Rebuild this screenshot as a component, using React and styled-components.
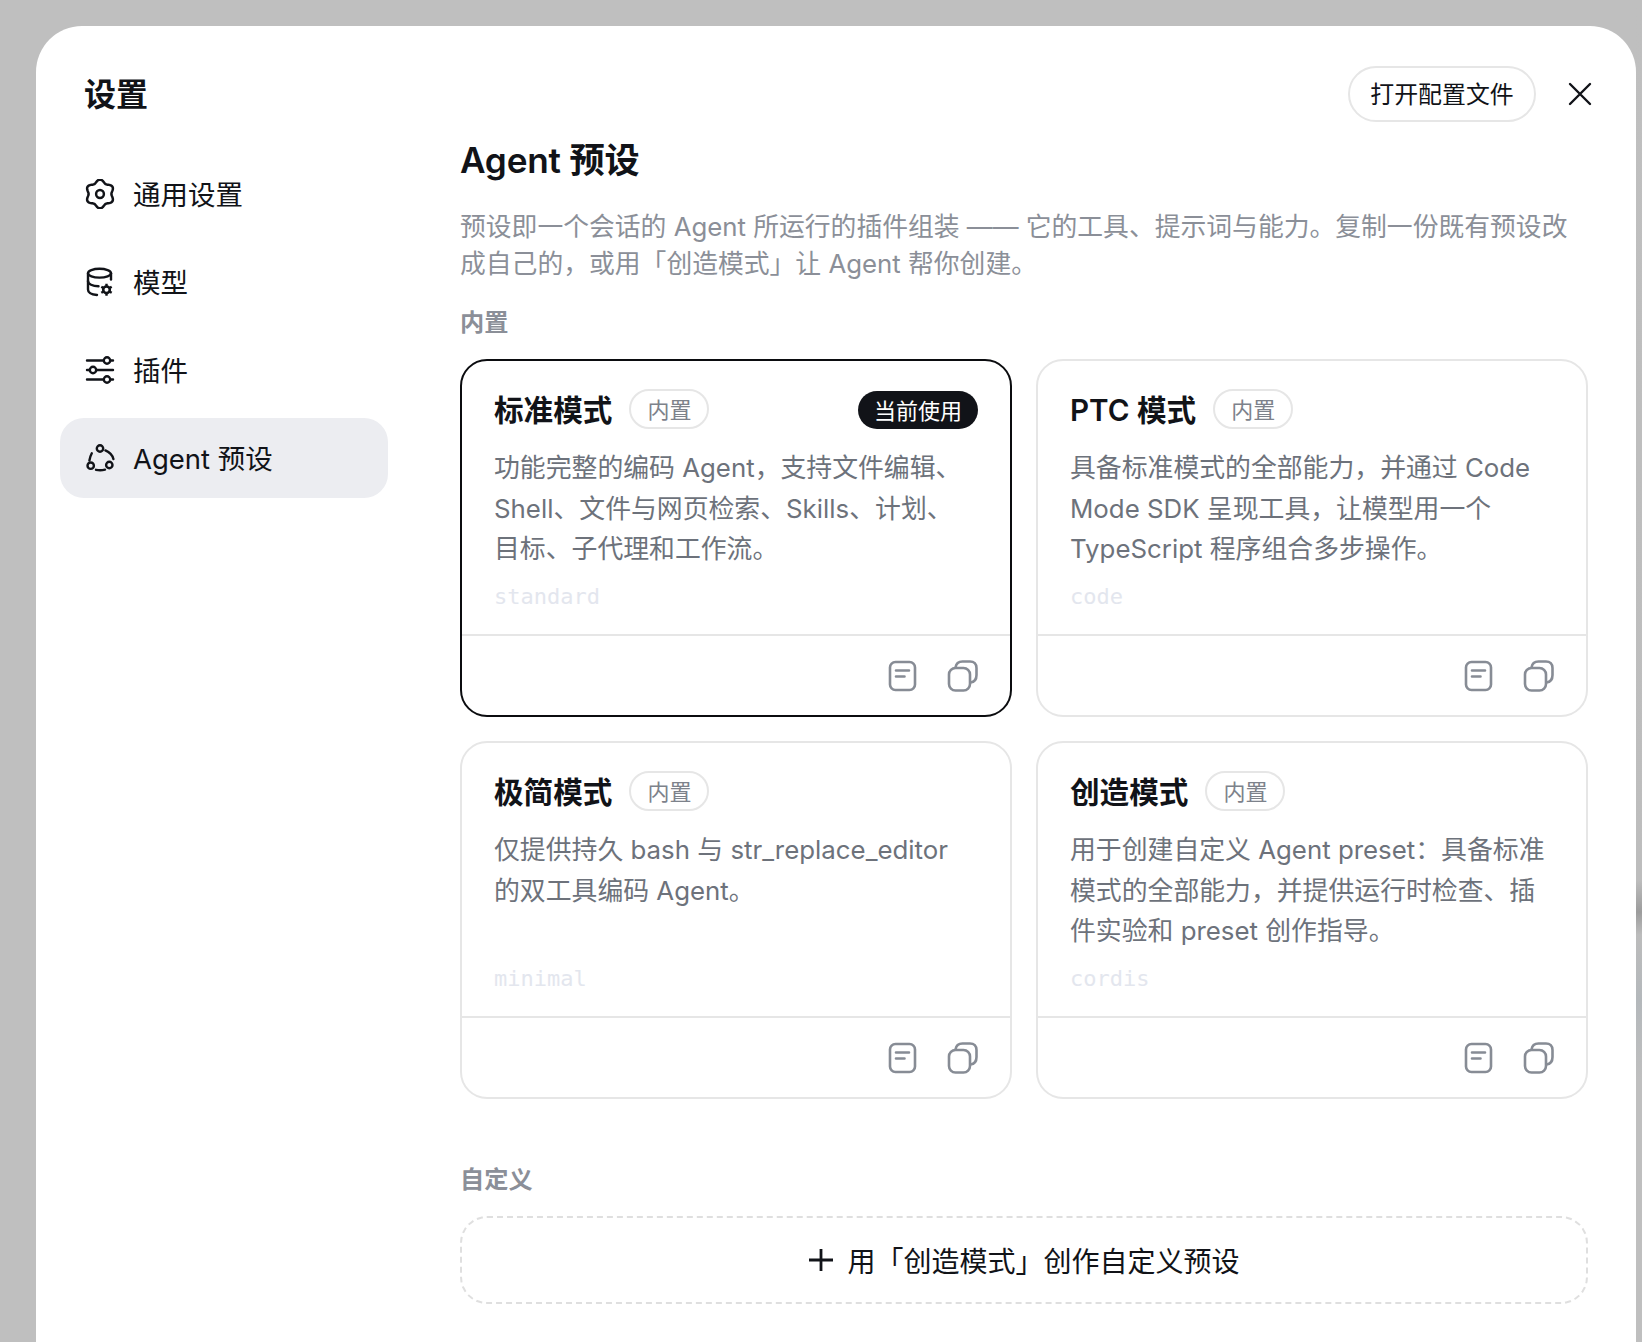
import React from "react";
import styled, { createGlobalStyle } from "styled-components";

const Global = createGlobalStyle`
  html, body { margin: 0; padding: 0; height: 100%; }
  body {
    background-color: #bfbfbf;
    background-image: linear-gradient(to bottom, #bfbfbf 0, #bdbdbd 880px, #9c9c9c 912px, #bcbcbc 935px, #b4b8bb 1000px, #bfbfbf 1080px);
    background-size: 6px 100%;
    background-position: right top;
    background-repeat: no-repeat;
    overflow: hidden;
    font-family: Inter, "Noto Sans CJK SC", sans-serif;
    color: #111318;
  }
  * { box-sizing: border-box; }
`;

const Modal = styled.div`
  margin: 26px 6px 0 36px;
  height: 1316px;
  background: #fff;
  border-radius: 46px 46px 0 0;
  display: grid;
  grid-template-columns: 424px 1fr;
  overflow: hidden;
`;

const Sidebar = styled.aside`
  padding: 49px 72px 0 24px;
  display: flex;
  flex-direction: column;
`;

const SideTitle = styled.h1`
  margin: 0 0 39px 24px;
  font-size: 32px;
  line-height: 40px;
  font-weight: 600;
`;

const NavList = styled.nav`
  display: flex;
  flex-direction: column;
  gap: 8px;
`;

const NavItem = styled.div`
  height: 80px;
  padding: 0 25px;
  display: flex;
  align-items: center;
  gap: 18px;
  border-radius: 24px;
  background: ${(p) => (p.$active ? "#ecedf1" : "transparent")};
  svg { width: 30px; height: 30px; flex: none; }
`;

const NavLabel = styled.span`
  font-size: 27.5px;
  margin-bottom: 3px;
`;

const Main = styled.main`
  position: relative;
  padding: 112px 48px 0 0;
  display: flex;
  flex-direction: column;
`;

const TopActions = styled.div`
  position: absolute;
  top: 40px;
  right: 41px;
  display: flex;
  align-items: center;
  gap: 29px;
`;

const ConfigButton = styled.button`
  height: 56px;
  width: 188px;
  border: 2px solid #e6e6e6;
  border-radius: 28px;
  background: #fff;
  color: #111318;
  font: 400 23.9px Inter, "Noto Sans CJK SC", sans-serif;
  padding: 0 0 3px;
`;

const CloseButton = styled.button`
  width: 30px;
  height: 30px;
  border: 0;
  padding: 0;
  background: none;
  color: #111318;
  display: flex;
  align-items: center;
  justify-content: center;
`;

const Heading = styled.h2`
  margin: 0;
  font-size: 35.2px;
  line-height: 44px;
  font-weight: 600;
  letter-spacing: -0.2px;
`;

const Intro = styled.p`
  margin: 27px 0 0;
  font-size: 25.8px;
  line-height: 36.7px;
  color: #8b8f98;
`;

const SectionLabel = styled.div`
  font-size: 24.2px;
  line-height: 30px;
  font-weight: 600;
  color: #8b8f98;
  margin-top: ${(p) => p.$top}px;
  margin-bottom: 21px;
`;

const CardGrid = styled.div`
  display: grid;
  grid-template-columns: 1fr 1fr;
  grid-auto-rows: 358px;
  gap: 24px;
`;

const Card = styled.article`
  border: 2px solid ${(p) => (p.$current ? "#0b0c0f" : "#e6e6e6")};
  border-radius: 27px;
  display: flex;
  flex-direction: column;
  min-width: 0;
`;

const CardBody = styled.div`
  flex: 1;
  min-height: 0;
  padding: 28px 32px 0;
  display: flex;
  flex-direction: column;
`;

const CardHead = styled.div`
  display: flex;
  align-items: center;
  gap: 17px;
  height: 42px;
`;

const CardName = styled.h3`
  margin: 0;
  font-size: 29.6px;
  line-height: 42px;
  font-weight: 600;
`;

const Tag = styled.span`
  height: 40px;
  margin-bottom: 2px;
  padding: 0 16px 2px;
  border: 2px solid #e6e6e6;
  border-radius: 20px;
  display: flex;
  align-items: center;
  font-size: 22px;
  color: #7d828b;
`;

const CurrentBadge = styled.span`
  margin-left: auto;
  height: 38px;
  padding: 0 16px 3px;
  border-radius: 19px;
  background: #111318;
  color: #fff;
  display: flex;
  align-items: center;
  font-size: 22px;
`;

const Desc = styled.p`
  margin: 17px 0 0;
  font-size: 25.85px;
  line-height: 40.4px;
  color: #6d727b;
  height: 121px;
`;

const Slug = styled.code`
  margin-top: 14px;
  font-family: "DejaVu Sans Mono", monospace;
  font-size: 22px;
  line-height: 28px;
  color: #e3e6ee;
`;

const CardFoot = styled.div`
  height: 81px;
  border-top: 2px solid #e6e6e6;
  padding: 0 31px 0 0;
  display: flex;
  align-items: center;
  justify-content: flex-end;
  gap: 30px;
`;

const IconButton = styled.span`
  display: flex;
  color: #878c95;
`;

const AddButton = styled.button`
  height: 88px;
  border: 2px dashed #dfdfdf;
  border-radius: 27px;
  background: #fff;
  color: #111318;
  font: 400 28px Inter, "Noto Sans CJK SC", sans-serif;
  display: flex;
  align-items: center;
  justify-content: center;
  gap: 13px;
  padding: 0;
`;

const flowerPath = (() => {
  const pts = [];
  for (let i = 0; i < 120; i += 1) {
    const t = (i / 120) * Math.PI * 2;
    const r = 12.9 + 1.5 * Math.cos(6 * t);
    pts.push(`${(15 + r * Math.sin(t)).toFixed(2)} ${(15 - r * Math.cos(t)).toFixed(2)}`);
  }
  return `M${pts.join("L")}Z`;
})();

const GearIcon = () => (
  <svg viewBox="0 0 30 30" fill="none" stroke="currentColor" strokeWidth="2.5" strokeLinejoin="round">
    <path d={flowerPath} />
    <circle cx="15" cy="15" r="3.9" />
  </svg>
);

const ModelIcon = () => (
  <svg viewBox="0 0 30 30" fill="none" stroke="currentColor" strokeWidth="2.4" strokeLinecap="round">
    <ellipse cx="14.5" cy="6.2" rx="11.5" ry="4.4" />
    <path d="M3 6.2V22.5C3 25.6 7 27.6 12 28" />
    <path d="M26 6.2V12.5" />
    <path d="M3 14C3 17 7.6 19.2 13.5 19.2" />
    <circle cx="21.5" cy="22.8" r="3.3" strokeWidth="2.6" />
    <path strokeWidth="2.4" strokeLinecap="butt" d="M21.5 16.8V19M21.5 26.6V28.8M16.3 19.8L18.2 20.9M24.8 24.7L26.7 25.8M16.3 25.8L18.2 24.7M24.8 20.9L26.7 19.8" />
  </svg>
);

const SlidersIcon = () => (
  <svg viewBox="0 0 30 30" fill="none" stroke="currentColor" strokeWidth="2.4" strokeLinecap="round">
    <path d="M2 5.5H18.6M25.4 5.5H28M2 15H4.6M11.4 15H28M2 24.5H18.6M25.4 24.5H28" />
    <circle cx="22" cy="5.5" r="3.2" />
    <circle cx="8" cy="15" r="3.2" />
    <circle cx="22" cy="24.5" r="3.2" />
  </svg>
);

const AgentIcon = () => (
  <svg viewBox="0 0 30 30" fill="none" stroke="currentColor" strokeWidth="2.4" strokeLinecap="round">
    <circle cx="15" cy="5.5" r="3.2" />
    <circle cx="5.7" cy="22.7" r="3.2" />
    <circle cx="24.3" cy="22" r="3.2" />
    <path d="M4.4 17.5C4.8 15 5.6 12.4 6.8 10.2" />
    <path d="M20.4 7.4C24.2 9 27.4 12 28.4 16" />
    <path d="M11 26.8C13.8 27.4 17 27.4 20 26.6" />
  </svg>
);

const CloseIcon = () => (
  <svg width="24" height="24" viewBox="0 0 24 24" fill="none" stroke="currentColor" strokeWidth="2.4" strokeLinecap="round">
    <path d="M2 2L22 22M22 2L2 22" />
  </svg>
);

const DocIcon = () => (
  <svg width="29" height="34" viewBox="0 0 29 34" fill="none" stroke="currentColor" strokeWidth="2.6" strokeLinecap="round">
    <rect x="2" y="3" width="25" height="28" rx="5.5" />
    <path d="M8 11.5H21M8 17.5H16.5" />
  </svg>
);

const CopyIcon = () => (
  <svg width="32" height="34" viewBox="0 0 32 34" fill="none" stroke="currentColor" strokeWidth="2.6" strokeLinecap="round">
    <rect x="2" y="9" width="21" height="22.5" rx="6.5" />
    <path d="M8.5 8.5C9 5 11.5 2.5 15.5 2.5H23C27 2.5 29.5 5 29.5 9V16C29.5 20.5 27.5 23 23.5 23.5" />
  </svg>
);

const PlusIcon = () => (
  <svg width="26" height="26" viewBox="0 0 26 26" fill="none" stroke="currentColor" strokeWidth="2.8">
    <path d="M13 2V24M1 13H25" />
  </svg>
);

const nav = [
  { label: "通用设置", Icon: GearIcon },
  { label: "模型", Icon: ModelIcon },
  { label: "插件", Icon: SlidersIcon },
  { label: "Agent 预设", Icon: AgentIcon, active: true },
];

const cards = [
  { name: "标准模式", slug: "standard", current: true, desc: "功能完整的编码 Agent，支持文件编辑、Shell、文件与网页检索、Skills、计划、目标、子代理和工作流。" },
  { name: "PTC 模式", slug: "code", desc: "具备标准模式的全部能力，并通过 Code Mode SDK 呈现工具，让模型用一个 TypeScript 程序组合多步操作。" },
  { name: "极简模式", slug: "minimal", desc: "仅提供持久 bash 与 str_replace_editor 的双工具编码 Agent。" },
  { name: "创造模式", slug: "cordis", desc: "用于创建自定义 Agent preset：具备标准模式的全部能力，并提供运行时检查、插件实验和 preset 创作指导。" },
];

export default function App() {
  return (
    <>
      <Global />
      <Modal>
        <Sidebar>
          <SideTitle>设置</SideTitle>
          <NavList>
            {nav.map(({ label, Icon, active }) => (
              <NavItem key={label} $active={active}>
                <Icon />
                <NavLabel>{label}</NavLabel>
              </NavItem>
            ))}
          </NavList>
        </Sidebar>
        <Main>
          <TopActions>
            <ConfigButton>打开配置文件</ConfigButton>
            <CloseButton><CloseIcon /></CloseButton>
          </TopActions>
          <Heading>Agent 预设</Heading>
          <Intro>预设即一个会话的 Agent 所运行的插件组装 —— 它的工具、提示词与能力。复制一份既有预设改成自己的，或用「创造模式」让 Agent 帮你创建。</Intro>
          <SectionLabel $top={26}>内置</SectionLabel>
          <CardGrid>
            {cards.map((c) => (
              <Card key={c.slug} $current={c.current}>
                <CardBody>
                  <CardHead>
                    <CardName>{c.name}</CardName>
                    <Tag>内置</Tag>
                    {c.current && <CurrentBadge>当前使用</CurrentBadge>}
                  </CardHead>
                  <Desc>{c.desc}</Desc>
                  <Slug>{c.slug}</Slug>
                </CardBody>
                <CardFoot>
                  <IconButton><DocIcon /></IconButton>
                  <IconButton><CopyIcon /></IconButton>
                </CardFoot>
              </Card>
            ))}
          </CardGrid>
          <SectionLabel $top={66}>自定义</SectionLabel>
          <AddButton><PlusIcon />用「创造模式」创作自定义预设</AddButton>
        </Main>
      </Modal>
    </>
  );
}
